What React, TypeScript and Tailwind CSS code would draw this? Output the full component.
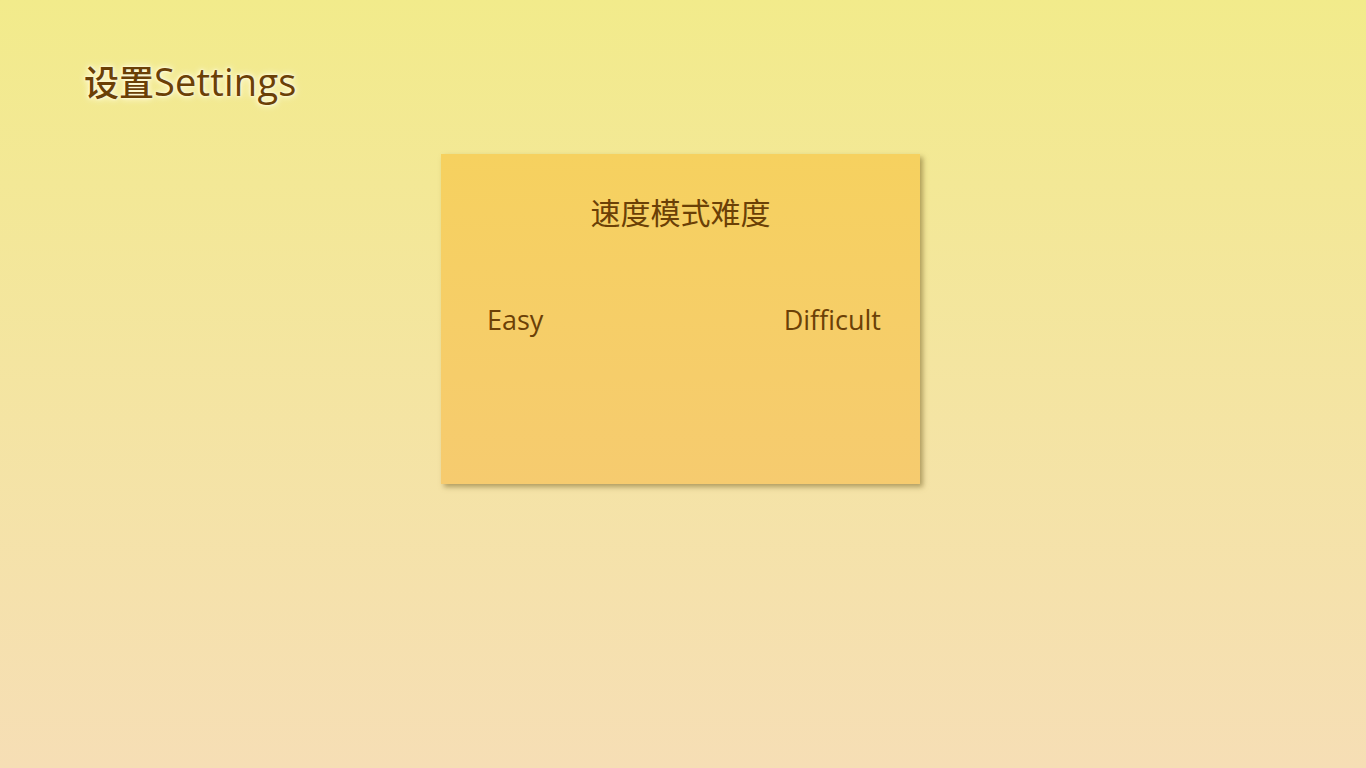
import React from 'react';

const font = '"Open Sans", "Noto Sans CJK SC", "Noto Sans", sans-serif';

export default function App() {
  return (
    <div
      className="w-full h-[768px] bg-gradient-to-b from-[#f2eb8b] to-[#f6deb5] text-[#6b4006] overflow-hidden"
      style={{ fontFamily: font }}
    >
      {/* Page header */}
      <div className="pl-[84px] pt-[56px]">
        <h1 className="h-[50px] text-[35px] leading-[50px] font-medium [text-shadow:0_0_3px_#fffbd8,0_0_6px_#fffbd8,0_0_9px_#fff6c8,0_0_2px_#ffffff]">
          设置<span className="text-[38px] leading-[50px] tracking-[0.2px]">Settings</span>
        </h1>
      </div>

      {/* Speed mode difficulty card */}
      <div className="flex pl-[441px] pt-[48px]">
        <div className="w-[479px] h-[330px] bg-gradient-to-b from-[#f6d15f] to-[#f6cb6f] shadow-[3px_3px_5px_rgba(120,100,40,0.55)] flex flex-col">
          <div className="text-center text-[30px] leading-[40px] mt-[39px]">速度模式难度</div>
          <div className="flex justify-between items-center pl-[46px] pr-[39px] mt-[67px] text-[27px] leading-[40px]">
            <span>Easy</span>
            <span>Difficult</span>
          </div>
        </div>
      </div>
    </div>
  );
}
